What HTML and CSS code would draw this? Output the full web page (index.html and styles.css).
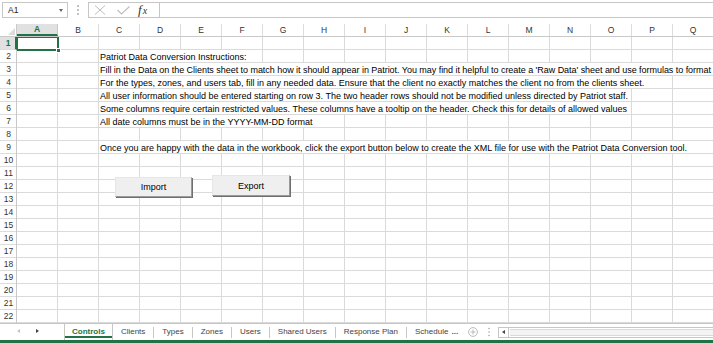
FILE: index.html
```html
<!DOCTYPE html>
<html>
<head>
<meta charset="utf-8">
<title>Controls</title>
<link rel="stylesheet" href="styles.css">
</head>
<body>
<div class="app">
  <div class="fbar">
    <div class="namebox"><span class="ref">A1</span><span class="nb-arrow"></span></div>
    <svg class="grip" width="14" height="16" viewBox="0 0 14 16"><circle cx="7" cy="4" r="0.9"/><circle cx="7" cy="8" r="0.9"/><circle cx="7" cy="12" r="0.9"/></svg>
    <div class="fbox">
      <div class="fbtns">
        <svg class="ico-x" width="12" height="10" viewBox="0 0 12 10"><path d="M1 0.5 L11 9.5 M11 0.5 L1 9.5"/></svg>
        <svg class="ico-ok" width="13" height="9" viewBox="0 0 13 9"><path d="M0.5 4 L4.5 8 L12.5 0.5"/></svg>
        <span class="fx"><span class="fx-f">f</span><span class="fx-x">x</span></span>
      </div>
      <div class="finput"></div>
    </div>
  </div>

  <div class="colheads">
    <div class="corner"><span class="corner-tri"></span></div>
    <div class="ch sel">A</div>
    <div class="ch">B</div>
    <div class="ch">C</div>
    <div class="ch">D</div>
    <div class="ch">E</div>
    <div class="ch">F</div>
    <div class="ch">G</div>
    <div class="ch">H</div>
    <div class="ch">I</div>
    <div class="ch">J</div>
    <div class="ch">K</div>
    <div class="ch">L</div>
    <div class="ch">M</div>
    <div class="ch">N</div>
    <div class="ch">O</div>
    <div class="ch">P</div>
    <div class="ch">Q</div>
  </div>

  <div class="sheet">
    <div class="rowheads">
      <div class="rh sel">1</div>
      <div class="rh">2</div>
      <div class="rh">3</div>
      <div class="rh">4</div>
      <div class="rh">5</div>
      <div class="rh">6</div>
      <div class="rh">7</div>
      <div class="rh">8</div>
      <div class="rh">9</div>
      <div class="rh">10</div>
      <div class="rh">11</div>
      <div class="rh">12</div>
      <div class="rh">13</div>
      <div class="rh">14</div>
      <div class="rh">15</div>
      <div class="rh">16</div>
      <div class="rh">17</div>
      <div class="rh">18</div>
      <div class="rh">19</div>
      <div class="rh">20</div>
      <div class="rh">21</div>
      <div class="rh">22</div>
    </div>
    <div class="cells">
      <div class="row"></div>
      <div class="row"><span class="txt w4">Patriot Data Conversion Instructions:</span></div>
      <div class="row"><span class="txt wfull fit">Fill in the Data on the Clients sheet to match how it should appear in Patriot. You may find it helpful to create a 'Raw Data' sheet and use formulas to format</span></div>
      <div class="row"><span class="txt w14">For the types, zones, and users tab, fill in any needed data. Ensure that the client no exactly matches the client no from the clients sheet.</span></div>
      <div class="row"><span class="txt w13">All user information should be entered starting on row 3. The two header rows should not be modified unless directed by Patriot staff.</span></div>
      <div class="row"><span class="txt w13">Some columns require certain restricted values. These columns have a tooltip on the header. Check this for details of allowed values</span></div>
      <div class="row"><span class="txt w6">All date columns must be in the YYYY-MM-DD format</span></div>
      <div class="row"></div>
      <div class="row"><span class="txt wfull">Once you are happy with the data in the workbook, click the export button below to create the XML file for use with the Patriot Data Conversion tool.</span></div>
      <div class="row"></div>
      <div class="row"></div>
      <div class="row"></div>
      <div class="row"></div>
      <div class="row"></div>
      <div class="row"></div>
      <div class="row"></div>
      <div class="row"></div>
      <div class="row"></div>
      <div class="row"></div>
      <div class="row"></div>
      <div class="row"></div>
      <div class="row"></div>

      <div class="selbox"><span class="handle"></span></div>
      <button class="xbtn btn-import">Import</button>
      <button class="xbtn btn-export">Export</button>
    </div>
  </div>

  <div class="tabbar">
    <div class="nav">
      <span class="tri-left"></span>
      <span class="tri-right"></span>
    </div>
    <div class="tab active">Controls</div>
    <div class="tab">Clients</div>
    <div class="tab">Types</div>
    <div class="tab">Zones</div>
    <div class="tab">Users</div>
    <div class="tab">Shared Users</div>
    <div class="tab">Response Plan</div>
    <div class="tab last">Schedule <span class="more-dots">...</span></div>
    <div class="addsheet"><svg width="10" height="10" viewBox="0 0 10 10"><circle cx="5" cy="5" r="4.4"/><path d="M5 2.5 V7.5 M2.5 5 H7.5"/></svg></div>
    <svg class="grip2" width="6" height="12" viewBox="0 0 6 12"><circle cx="3" cy="2.5" r="0.8"/><circle cx="3" cy="6" r="0.8"/><circle cx="3" cy="9.5" r="0.8"/></svg>
    <div class="hscroll">
      <div class="hs-btn"><span class="hs-tri"></span></div>
      <div class="hs-thumb"></div>
    </div>
  </div>
</div>
</body>
</html>
```

FILE: styles.css
```css
* { box-sizing: border-box; }

html, body {
  margin: 0;
  padding: 0;
  background: #ffffff;
}

.app {
  width: 713px;
  height: 343px;
  overflow: hidden;
  font-family: "Liberation Sans", Arial, sans-serif;
  color: #000;
  background: #fff;
}

/* ---------- formula bar ---------- */
.fbar {
  height: 24px;
  display: flex;
  align-items: flex-start;
  padding-top: 2px;
}

.namebox {
  margin-left: 2px;
  width: 66px;
  height: 16px;
  border: 1px solid #c6c6c6;
  display: flex;
  align-items: center;
  justify-content: space-between;
  padding: 0 4px 0 5px;
}

.ref {
  font-size: 8.5px;
  color: #222;
}

.nb-arrow {
  width: 0;
  height: 0;
  border-left: 2.5px solid transparent;
  border-right: 2.5px solid transparent;
  border-top: 3px solid #666;
}

.grip {
  margin-left: 3px;
  fill: #a6a6a6;
}

.fbox {
  margin-left: 3px;
  flex: 1;
  height: 16px;
  border: 1px solid #c6c6c6;
  border-right: none;
  display: flex;
}

.fbtns {
  width: 71px;
  border-right: 1px solid #c6c6c6;
  display: flex;
  align-items: center;
}

.ico-x {
  margin-left: 5px;
  stroke: #bdbdbd;
  stroke-width: 1;
  fill: none;
}

.ico-ok {
  margin-left: 11px;
  stroke: #bdbdbd;
  stroke-width: 1.1;
  fill: none;
}

.fx {
  margin-left: 8px;
  font-family: "Liberation Serif", "Times New Roman", serif;
  font-style: italic;
  color: #333;
  line-height: 14px;
  white-space: nowrap;
}

.fx-f {
  font-size: 13px;
}

.fx-x {
  font-size: 10px;
  margin-left: 1px;
}

.finput {
  flex: 1;
}

/* ---------- column headers ---------- */
.colheads {
  height: 13px;
  display: flex;
  border-bottom: 1px solid #c9c9c9;
}

.corner {
  width: 17px;
  flex: none;
  border-right: 1px solid #c9c9c9;
  position: relative;
}

.corner-tri {
  position: absolute;
  right: 1px;
  bottom: 1px;
  width: 0;
  height: 0;
  border-left: 7px solid transparent;
  border-bottom: 7px solid #dcdcdc;
}

.ch {
  width: 41px;
  flex: none;
  border-right: 1px solid #dcdcdc;
  font-size: 8.5px;
  color: #333;
  text-align: center;
  line-height: 12px;
}

.ch.sel {
  background: #e1e1e1;
  color: #217346;
  font-weight: bold;
  border-bottom: 2px solid #217346;
  line-height: 11px;
  border-right-color: #c9c9c9;
}

/* ---------- sheet ---------- */
.sheet {
  display: flex;
  height: 286px;
}

.rowheads {
  width: 17px;
  flex: none;
  border-right: 1px solid #c9c9c9;
}

.rh {
  height: 13px;
  border-bottom: 1px solid #dcdcdc;
  font-size: 8.5px;
  color: #333;
  text-align: center;
  line-height: 13px;
  padding-left: 1px;
}

.rh.sel {
  background: #e1e1e1;
  color: #217346;
  font-weight: bold;
  border-right: 2px solid #217346;
  margin-right: -1px;
}

.cells {
  flex: 1;
  position: relative;
  overflow: hidden;
  background-color: #fff;
  background-image:
    repeating-linear-gradient(to right, transparent 0 40px, #dadada 40px 41px),
    repeating-linear-gradient(to bottom, transparent 0 12px, #dadada 12px 13px);
}

.row {
  height: 13px;
  white-space: nowrap;
}

.txt {
  display: inline-block;
  vertical-align: top;
  margin-left: 82px;
  height: 12px;
  padding: 1px 0 0 1px;
  background: #fff;
  font-size: 9px;
  line-height: 12px;
  color: #000;
  overflow: hidden;
  white-space: nowrap;
}

.txt.fit {
  letter-spacing: -0.04px;
}

.w4 { width: 163px; }
.w6 { width: 245px; }
.w13 { width: 532px; }
.w14 { width: 573px; }
.wfull { width: calc(100% - 82px); }

.selbox {
  position: absolute;
  left: -1px;
  top: -1px;
  width: 43px;
  height: 15px;
  border: 2px solid #217346;
}

.handle {
  position: absolute;
  right: -4px;
  bottom: -4px;
  width: 5px;
  height: 5px;
  background: #217346;
  border: 1px solid #fff;
}

.xbtn {
  position: absolute;
  margin: 0;
  padding: 0;
  font-family: "Liberation Sans", Arial, sans-serif;
  font-size: 9px;
  color: #000;
  background: #efefef;
  border-style: solid;
  border-width: 1px;
  border-color: #e6e6e6 #9a9a9a #9a9a9a #e6e6e6;
  box-shadow: 1px 1px 0 #6f6f6f;
}

.btn-import {
  left: 98px;
  top: 140px;
  width: 77px;
  height: 20px;
}

.btn-export {
  left: 195px;
  top: 138px;
  width: 78px;
  height: 21px;
}

/* ---------- sheet tabs ---------- */
.tabbar {
  height: 20px;
  border-top: 1px solid #c6c6c6;
  border-bottom: 3px solid #217346;
  display: flex;
  align-items: stretch;
  background: #fff;
  font-size: 8px;
  color: #444;
}

.nav {
  width: 64px;
  flex: none;
  position: relative;
}

.tri-left {
  position: absolute;
  left: 17px;
  top: 5px;
  width: 0;
  height: 0;
  border-top: 2.5px solid transparent;
  border-bottom: 2.5px solid transparent;
  border-right: 3px solid #c4c4c4;
}

.tri-right {
  position: absolute;
  left: 36px;
  top: 5px;
  width: 0;
  height: 0;
  border-top: 2.5px solid transparent;
  border-bottom: 2.5px solid transparent;
  border-left: 3px solid #444;
}

.tab {
  position: relative;
  padding: 0 8px;
  margin-right: 1px;
  line-height: 16px;
  white-space: nowrap;
}

.tab::after {
  content: "";
  position: absolute;
  right: -1px;
  top: 3px;
  bottom: 2px;
  width: 1px;
  background: #c6c6c6;
}

.tab.active {
  padding: 0 7px;
  margin-right: 0;
  border-left: 1px solid #c6c6c6;
  border-right: 1px solid #c6c6c6;
  background: #fff;
  color: #217346;
  font-weight: bold;
}

.tab.active::after {
  right: 0;
  left: 0;
  top: auto;
  bottom: 2px;
  width: auto;
  height: 2px;
  background: #217346;
}

.tab.last {
  padding-right: 0;
}

.tab.last::after {
  display: none;
}

.more-dots {
  color: #217346;
  font-weight: bold;
  margin-left: 1px;
}

.addsheet {
  margin-left: 9px;
  display: flex;
  align-items: center;
}

.addsheet svg {
  fill: none;
  stroke: #b4b4b4;
  stroke-width: 0.9;
}

.grip2 {
  margin-left: 8px;
  align-self: center;
  fill: #a6a6a6;
}

.hscroll {
  margin-left: 6px;
  flex: 1;
  align-self: center;
  height: 11px;
  border: 1px solid #c6c6c6;
  border-right: none;
  display: flex;
  background: #fff;
}

.hs-btn {
  width: 10px;
  border-right: 1px solid #c6c6c6;
  position: relative;
}

.hs-tri {
  position: absolute;
  left: 3px;
  top: 2px;
  width: 0;
  height: 0;
  border-top: 2.5px solid transparent;
  border-bottom: 2.5px solid transparent;
  border-right: 3px solid #444;
}

.hs-thumb {
  flex: 1;
  margin: 1px 0 1px 1px;
  background: #f3f3f3;
  border-top: 1px solid #dadada;
  border-bottom: 1px solid #dadada;
}
```
